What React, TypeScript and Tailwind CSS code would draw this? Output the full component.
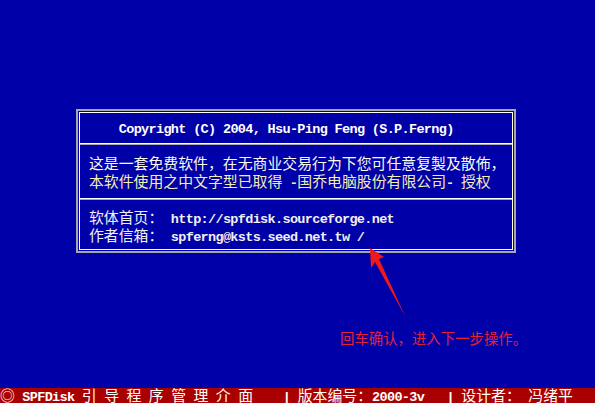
import type { ReactNode } from "react";

// DOS text-mode screen: every ASCII char takes one 7.44px cell, every
// CJK / full-width char takes two.
const RUNS = /[\u2000-\uffff]+|[^\u2000-\uffff]+/g;

function DosText({ text }: { text: string }) {
  const runs = text.match(RUNS) ?? [];
  return (
    <>
      {runs.map((run, i) =>
        run.charCodeAt(0) >= 0x2000 ? (
          <span
            key={i}
            className="font-['Noto_Sans_CJK_SC',sans-serif] text-[14.88px]"
          >
            {run}
          </span>
        ) : (
          <span
            key={i}
            className="whitespace-pre font-['Liberation_Mono',monospace] text-[13.5px] font-bold tracking-[-0.66px]"
          >
            {run}
          </span>
        ),
      )}
    </>
  );
}

function Line({ className, children }: { className?: string; children: ReactNode }) {
  return (
    <div className={`h-[18px] whitespace-nowrap leading-[18px] ${className ?? ""}`}>
      {children}
    </div>
  );
}

function Separator() {
  return <div className="h-[2px] border-t border-b border-t-white border-b-[#a8a8a8]" />;
}

export default function App() {
  return (
    <div className="relative flex h-[403px] w-[595px] flex-col overflow-hidden bg-[#0000a8] text-white">
      {/* ── About box ───────────────────────────────────────────── */}
      <div className="ml-[76px] mt-[109px] w-[440px] border-2 border-[#a8a8a8] p-px">
        <div className="border border-white">
          <div className="flex h-[30px] items-center pb-[2px] pl-[9px]">
            <Line className="text-white">
              <DosText text="    Copyright (C) 2004, Hsu-Ping Feng (S.P.Ferng)" />
            </Line>
          </div>
          <Separator />
          <div className="pb-[8px] pl-[9px] pt-[9px]">
            <Line className="text-[#fafaf0]">
              <DosText text="这是一套免费软件，在无商业交易行为下您可任意复製及散佈，" />
            </Line>
            <Line className="text-[#f4eeb4]">
              <DosText text="本软件使用之中文字型已取得 -国乔电脑股份有限公司- 授权" />
            </Line>
          </div>
          <Separator />
          <div className="pb-[5px] pl-[9px] pt-[8px]">
            <Line className="text-[#f0f0f0]">
              <DosText text="软体首页： http://spfdisk.sourceforge.net" />
            </Line>
            <Line className="text-[#f0f0f0]">
              <DosText text="作者信箱： spferng@ksts.seed.net.tw /" />
            </Line>
          </div>
        </div>
      </div>

      {/* ── Annotation ──────────────────────────────────────────── */}
      <div className="ml-[340px] mt-[77px] h-[16px] whitespace-nowrap font-['Noto_Sans_CJK_SC',sans-serif] text-[14.4px] leading-[16px] text-[#e4203a]">
        回车确认，进入下一步操作。
      </div>

      {/* ── Status bar ──────────────────────────────────────────── */}
      <div className="mt-auto h-[15px] whitespace-nowrap bg-[#a80000] leading-[14px] text-white">
        <DosText text="◎ SPFDisk 引 导 程 序 管 理 介 面    | 版本编号：2000-3v   | 设计者： 冯绪平" />
      </div>

      <svg
        className="pointer-events-none absolute left-0 top-0"
        width="595"
        height="403"
        viewBox="0 0 595 403"
      >
        <polygon
          points="370,248 384,257 379,259 405,316 375,262 371,268"
          fill="#f01818"
        />
      </svg>
    </div>
  );
}
